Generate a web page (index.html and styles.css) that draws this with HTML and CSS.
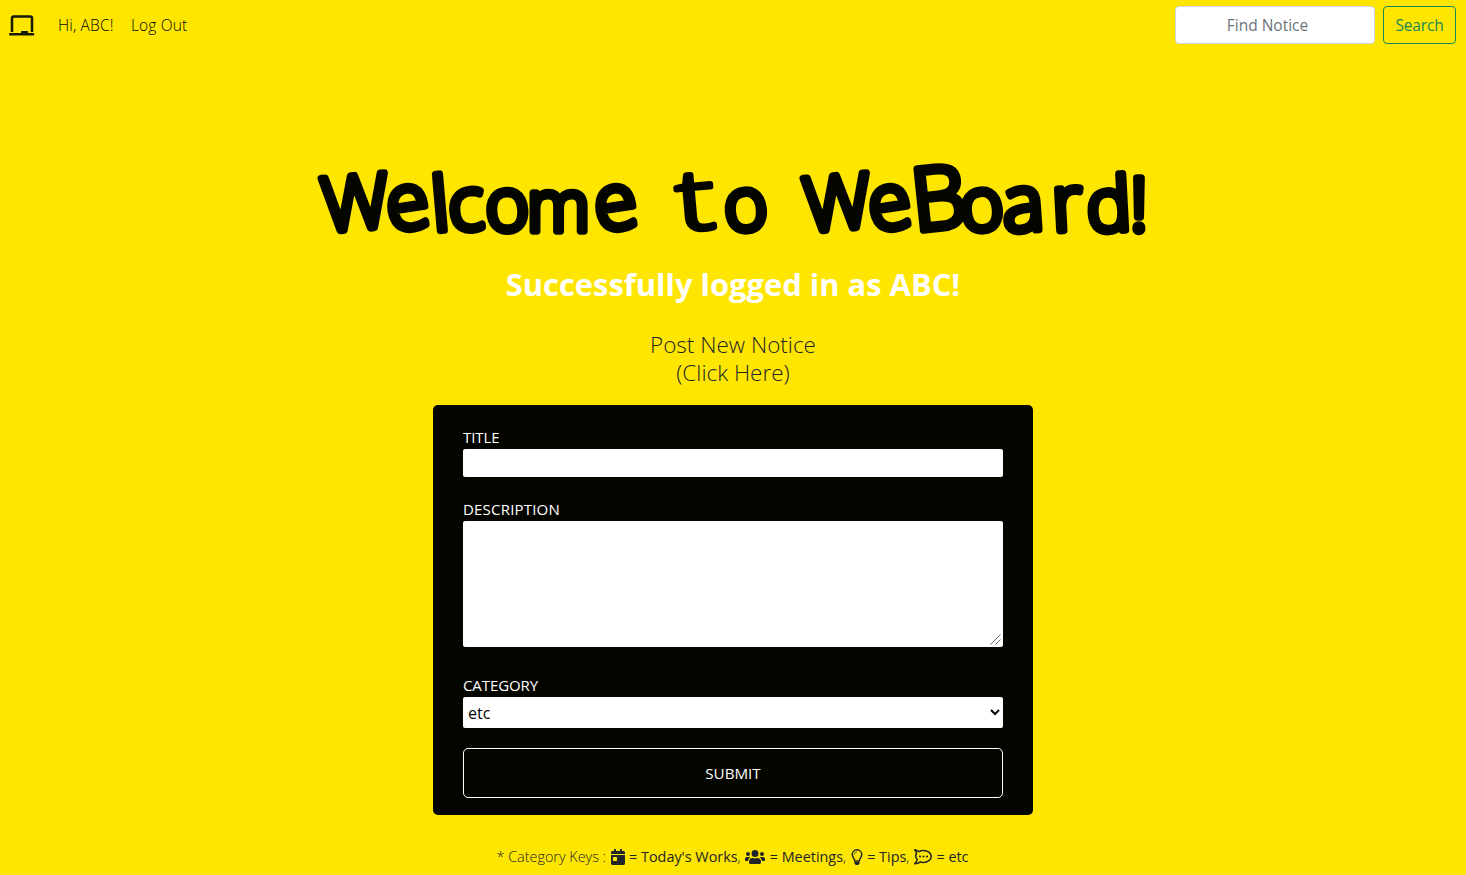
FILE: index.html
```html
<!DOCTYPE html>
<html lang="en">
<head>
<meta charset="utf-8">
<title>WeBoard</title>
<link rel="stylesheet" href="styles.css">
</head>
<body>
<nav class="navbar">
  <a class="brand" href="#" aria-label="WeBoard">
    <svg width="26" height="22" viewBox="0 0 26 22"><path d="M3 17V3.200Q3 1.500 4.700 1.500H21.300Q23 1.500 23 3.200V17" fill="none" stroke="currentColor" stroke-width="2.500"/><path d="M.8 18H12V16.500Q12 16 12.500 16H18.500Q19 16 19 16.500V18H24.600Q25.200 18 25.200 18.600V19.900Q25.200 20.500 24.600 20.500H.8Q.2 20.500 .2 19.900V18.600Q.2 18 .8 18Z" fill="currentColor"/></svg>
  </a>
  <a class="nav-link hi" href="#">Hi, ABC!</a>
  <a class="nav-link" href="#">Log Out</a>
  <form class="search">
    <input class="search-input" type="text" placeholder="Find Notice">
    <button class="search-button" type="button">Search</button>
  </form>
</nav>
<main class="main">
  <h1 class="welcome">
    <svg width="840" height="100" viewBox="313 150 840 100"><g class="hand">
      <text><tspan class="cap" x="324" y="232" rotate="-5">W</tspan><tspan class="tall" x="390" y="232" rotate="-9">e</tspan><tspan x="434 450" y="231" rotate="-5 -4">lc</tspan><tspan x="487" y="232" rotate="-4">o</tspan><tspan class="em" x="527" y="231" rotate="0">m</tspan><tspan class="tall" x="598" y="232" rotate="-9">e</tspan></text>
      <text class="tee" transform="translate(679 231) rotate(-5) scale(1.35 1)">t</text><text x="726" y="232" rotate="-5">o</text>
      <text><tspan class="cap" x="806" y="232" rotate="-5">W</tspan><tspan class="tall" x="872" y="232" rotate="-9">e</tspan><tspan class="bee" x="915" y="231" rotate="-6">B</tspan><tspan x="962" y="232" rotate="-5">o</tspan><tspan class="tall" x="1004" y="232" rotate="-4">a</tspan><tspan class="tall" x="1053" y="231" rotate="-3">r</tspan><tspan x="1088 1130" y="232 231" rotate="-3 0">d!</tspan></text>
    </g></svg>
  </h1>
  <h2 class="message">Successfully logged in as ABC!</h2>
  <div class="toggle"><div>Post New Notice</div><div>(Click Here)</div></div>
  <form class="card">
    <label class="label" for="title">TITLE</label>
    <input class="field" id="title" type="text">
    <label class="label wide" for="description">DESCRIPTION</label>
    <div class="area-wrap">
      <textarea class="field area" id="description"></textarea>
      <svg class="grip" width="11" height="11" viewBox="0 0 11 11"><path d="M.5 10.500l10-10M5.500 10.500l5-5" stroke="#555" stroke-width=".9"/></svg>
    </div>
    <label class="label" for="category">CATEGORY</label>
    <select class="field select" id="category"><option>etc</option></select>
    <button class="submit" type="button">SUBMIT</button>
  </form>
  <div class="keys">
    <span class="thin lead">* Category Keys :</span>
    <svg width="14" height="16" viewBox="0 0 448 512"><path fill="currentColor" d="M0 464c0 27 21 48 48 48h352c27 0 48-21 48-48V192H0v272zm64-192c0-9 7-16 16-16h96c9 0 16 7 16 16v96c0 9-7 16-16 16H80c-9 0-16-7-16-16v-96zM400 64h-48V16c0-9-7-16-16-16h-32c-9 0-16 7-16 16v48H160V16c0-9-7-16-16-16h-32c-9 0-16 7-16 16v48H48C21 64 0 85 0 112v48h448v-48c0-27-21-48-48-48z"/></svg>
    <span>= Today's Works<span class="thin">,</span></span>
    <svg width="20" height="16" viewBox="0 0 640 512"><path fill="currentColor" d="M96 224a64 64 0 1 0 0-128 64 64 0 0 0 0 128zm448 0a64 64 0 1 0 0-128 64 64 0 0 0 0 128zm32 32h-64c-18 0-34 7-45 18 40 22 69 62 75 110h66c18 0 32-14 32-32v-32c0-35-29-64-64-64zm-256 0a112 112 0 1 0 0-224 112 112 0 0 0 0 224zm77 32h-8c-42 20-96 20-138 0h-8c-64 0-115 51-115 115v29c0 27 21 48 48 48h288c27 0 48-21 48-48v-29c0-64-51-115-115-115zm-224-14c-11-11-27-18-45-18H64c-35 0-64 29-64 64v32c0 18 14 32 32 32h66c6-48 35-88 75-110z"/></svg>
    <span>= Meetings<span class="thin">,</span></span>
    <svg width="12" height="16" viewBox="0 0 352 512"><path fill="none" stroke="currentColor" stroke-width="46" d="M105 384C102 300 24 274 24 176a152 152 0 0 1 304 0c0 98-78 124-81 208z"/><path fill="none" stroke="currentColor" stroke-width="24" d="M88 176c0-48 40-88 88-88"/><path fill="currentColor" d="M96 416h160v43l-30 43-13 10h-74l-13-10-30-43z"/></svg>
    <span>= Tips<span class="thin">,</span></span>
    <svg width="18" height="16" viewBox="0 0 576 512"><path fill="none" stroke="currentColor" stroke-width="50" stroke-linejoin="round" d="M94 56C67 34 44 29 24 27c36 31 56 60 56 104-8 16-24 45-24 93 0 50 18 84 48 116-15 45-45 92-80 129 72 1 132-24 178-53 30 9 66 14 98 14 139 0 252-86 252-192S439 48 300 48c-52 0-98 10-138 34-20-13-43-23-68-26z"/><g fill="currentColor"><circle cx="192" cy="240" r="34"/><circle cx="304" cy="240" r="34"/><circle cx="416" cy="240" r="34"/></g></svg>
    <span>= etc</span>
  </div>
</main>
</body>
</html>
```

FILE: styles.css
```css
* { box-sizing: border-box; }
body {
  margin: 0;
  height: 875px;
  overflow: hidden;
  background: #ffe600;
  color: #212529;
  font: 400 16px/24px "Open Sans", "Noto Sans", sans-serif;
}
.navbar {
  display: flex;
  align-items: center;
  height: 50px;
  padding: 0 10px 0 9px;
  color: #050500;
}
.brand { display: block; width: 49px; height: 22px; margin-top: 2px; color: #171904; }
.brand svg { display: block; }
.nav-link {
  color: inherit;
  text-decoration: none;
  font-size: 15.5px;
  font-weight: 350;
  width: 57px;
  white-space: nowrap;
  letter-spacing: 0.15px;
}
.hi { margin-right: 16px; }
.search { display: flex; gap: 8px; margin-left: auto; }
.search-input {
  width: 200px;
  height: 38px;
  margin: 0;
  padding: 6px 27px 6px 12px;
  border: 1px solid #ced4da;
  border-radius: 4px;
  background: #fff;
  font: inherit;
  font-size: 15.5px;
  text-align: center;
}
.search-input::placeholder { color: #6c757d; opacity: 1; }
.search-button {
  width: 73px;
  height: 38px;
  padding: 0;
  border: 1px solid #198754;
  border-radius: 4px;
  background: transparent;
  color: #198754;
  font: inherit;
  font-size: 15.5px;
  letter-spacing: -0.15px;
}
.main { display: flex; flex-direction: column; align-items: center; }
.welcome { margin: 100px 0 0; height: 100px; }
.welcome svg { display: block; overflow: visible; }
.hand {
  font: 300 74px "Open Sans", sans-serif;
  fill: #050500;
  stroke: #050500;
  stroke-width: 7.5px;
  stroke-linejoin: round;
  stroke-linecap: round;
}
.cap { font-size: 75px; }
.tall { font-size: 78px; }
.em { font-size: 71px; }
.tee { font-size: 84px; stroke-width: 5px; }
.bee { font-size: 86px; }
.message {
  margin: 15px 0 0;
  color: #fff;
  font-size: 30.9px;
  font-weight: 700;
  line-height: 38px;
  white-space: nowrap;
}
.toggle {
  margin-top: 28px;
  font-size: 22.5px;
  font-weight: 300;
  line-height: 28px;
  text-align: center;
}
.card {
  display: flex;
  flex-direction: column;
  width: 600px;
  height: 410px;
  margin-top: 18px;
  padding: 20px 30px 17px;
  border-radius: 5px;
  background: #050500;
  color: #fff;
}
.label { height: 24px; font-size: 15px; letter-spacing: -0.1px; }
.wide { letter-spacing: 0.2px; }
.field {
  display: block;
  width: 540px;
  height: 28px;
  margin: 0 0 20px;
  border: 0;
  border-radius: 2px;
  background: #fff;
  color: #050500;
  font: inherit;
}
.area-wrap { position: relative; height: 126px; margin-bottom: 26px; }
.area { height: 126px; margin: 0; resize: none; }
.grip { position: absolute; right: 2px; bottom: 2px; }
.select { height: 31px; padding: 1px 3px 0 1px; }
.submit {
  height: 50px;
  border: 1px solid #fff;
  border-radius: 5px;
  background: transparent;
  color: #fff;
  font: inherit;
  font-size: 15.2px;
}
.keys {
  display: flex;
  align-items: center;
  gap: 4.5px;
  margin-top: 30px;
  font-size: 14.4px;
  white-space: nowrap;
}
.keys svg { display: block; }
.lead { margin-left: -1px; }
.thin { font-weight: 300; }
```
